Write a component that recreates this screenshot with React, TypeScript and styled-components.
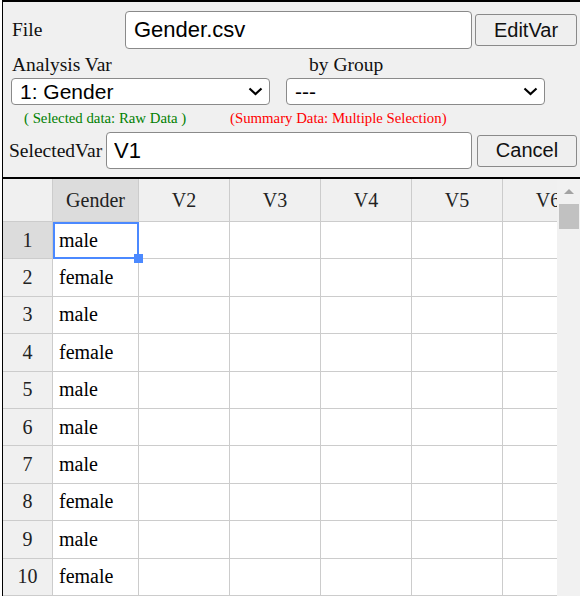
import styled, { createGlobalStyle } from 'styled-components';

const GlobalStyle = createGlobalStyle`
  html, body {
    margin: 0;
    padding: 0;
    background: #ffffff;
    font-family: 'Liberation Serif', 'Times New Roman', serif;
    overflow: hidden;
  }
`;

const Frame = styled.div`
  margin-left: 2px;
  border-left: 1px solid #000;
  height: 596px;
  display: flex;
  flex-direction: column;
`;

const Panel = styled.section`
  background: #f0f0f0;
  border-top: 2px solid #000;
  border-bottom: 2px solid #000;
  padding: 9px 0 8px 0;
  display: flex;
  flex-direction: column;
`;

const Row = styled.div<{ $h: number; $top?: number }>`
  display: flex;
  align-items: center;
  height: ${(p) => p.$h}px;
  margin-top: ${(p) => p.$top ?? 0}px;
`;

const Label = styled.label<{ $w: number; $pad: number }>`
  width: ${(p) => p.$w}px;
  padding-left: ${(p) => p.$pad}px;
  box-sizing: border-box;
  font-size: 19.5px;
  color: #111;
  white-space: nowrap;
`;

const TextBox = styled.input<{ $w: number; $pad: number }>`
  width: ${(p) => p.$w}px;
  height: 100%;
  box-sizing: border-box;
  border: 1px solid #8a8a8a;
  border-radius: 4px;
  background: #fff;
  padding: 0 0 0 ${(p) => p.$pad}px;
  font-family: 'Liberation Sans', Arial, sans-serif;
  font-size: 22px;
  color: #000;
  outline: none;
`;

const Button = styled.button<{ $w: number; $ml: number }>`
  width: ${(p) => p.$w}px;
  height: 32px;
  margin-left: ${(p) => p.$ml}px;
  box-sizing: border-box;
  border: 1px solid #8a8a8a;
  border-radius: 3px;
  background: #efefef;
  font-family: 'Liberation Sans', Arial, sans-serif;
  font-size: 20px;
  color: #111;
  padding: 0;
  cursor: pointer;
`;

const SelectWrap = styled.div<{ $ml: number }>`
  position: relative;
  width: 259px;
  height: 27px;
  margin-left: ${(p) => p.$ml}px;
`;

const Select = styled.select`
  appearance: none;
  width: 100%;
  height: 100%;
  box-sizing: border-box;
  border: 1px solid #8a8a8a;
  border-radius: 4px;
  background: #fff;
  padding: 0 0 0 8px;
  font-family: 'Liberation Sans', Arial, sans-serif;
  font-size: 21px;
  color: #000;
  outline: none;
`;

const Chevron = styled.svg`
  position: absolute;
  right: 7px;
  top: 9px;
  pointer-events: none;
`;

const Note = styled.span<{ $color: string; $w: number; $pad: number }>`
  width: ${(p) => p.$w}px;
  padding-left: ${(p) => p.$pad}px;
  box-sizing: border-box;
  font-size: 14.8px;
  color: ${(p) => p.$color};
  white-space: nowrap;
`;

const SheetArea = styled.div`
  flex: 1;
  display: flex;
  min-height: 0;
  overflow: hidden;
`;

const Sheet = styled.div`
  flex: 1;
  overflow: hidden;
  display: grid;
  grid-template-columns: 50px 86px repeat(5, 91px);
  grid-template-rows: 43px;
  grid-auto-rows: 37.4px;
  align-content: start;
`;

const HeadCell = styled.div<{ $active?: boolean }>`
  background: ${(p) => (p.$active ? '#dcdcdc' : '#f0f0f0')};
  border-right: 1px solid #cccccc;
  border-bottom: 1px solid #cccccc;
  display: flex;
  align-items: center;
  justify-content: center;
  font-size: 20px;
  color: #222;
  white-space: nowrap;
  overflow: hidden;
`;

const Cell = styled.div<{ $selected?: boolean }>`
  position: relative;
  background: #fff;
  border-right: 1px solid #cccccc;
  border-bottom: 1px solid #cccccc;
  display: flex;
  align-items: center;
  padding-left: 6px;
  font-size: 20px;
  color: #000;

  ${(p) =>
    p.$selected &&
    `
    &::after {
      content: '';
      position: absolute;
      left: 0;
      top: 0;
      right: -1px;
      bottom: -1px;
      border: 2px solid #4b89ff;
    }
    &::before {
      content: '';
      position: absolute;
      right: -5px;
      bottom: -5px;
      width: 9px;
      height: 9px;
      background: #4b89ff;
      z-index: 2;
    }
  `}
`;

const ScrollTrack = styled.div`
  width: 23px;
  background: #f1f1f1;
  display: flex;
  flex-direction: column;
  align-items: center;
  padding-top: 10px;
`;

const ScrollArrow = styled.div`
  width: 0;
  height: 0;
  border-left: 5px solid transparent;
  border-right: 5px solid transparent;
  border-bottom: 5px solid #a3a3a3;
`;

const ScrollThumb = styled.div`
  width: 20px;
  height: 25px;
  margin-top: 10px;
  background: #c1c1c1;
`;

const columns = ['Gender', 'V2', 'V3', 'V4', 'V5', 'V6'];
const genders = ['male', 'female', 'male', 'female', 'male', 'male', 'male', 'female', 'male', 'female'];

export default function App() {
  return (
    <>
      <GlobalStyle />
      <Frame>
        <Panel>
          <Row $h={38}>
            <Label $w={122} $pad={9}>File</Label>
            <TextBox $w={347} $pad={8} defaultValue="Gender.csv" readOnly />
            <Button $w={102} $ml={3}>EditVar</Button>
          </Row>
          <Row $h={24} $top={4}>
            <Label $w={306} $pad={9}>Analysis Var</Label>
            <Label $w={200} $pad={0}>by Group</Label>
          </Row>
          <Row $h={27} $top={1}>
            <SelectWrap $ml={8}>
              <Select defaultValue="1">
                <option value="1">1: Gender</option>
              </Select>
              <Chevron width="15" height="9" viewBox="0 0 15 9">
                <path d="M1.5 1.5 L7.5 7 L13.5 1.5" fill="none" stroke="#000" strokeWidth="2.2" />
              </Chevron>
            </SelectWrap>
            <SelectWrap $ml={16}>
              <Select defaultValue="-">
                <option value="-">---</option>
              </Select>
              <Chevron width="15" height="9" viewBox="0 0 15 9">
                <path d="M1.5 1.5 L7.5 7 L13.5 1.5" fill="none" stroke="#000" strokeWidth="2.2" />
              </Chevron>
            </SelectWrap>
          </Row>
          <Row $h={27}>
            <Note $color="#008000" $w={227} $pad={21}>( Selected data: Raw Data )</Note>
            <Note $color="#ff0000" $w={260} $pad={0}>(Summary Data: Multiple Selection)</Note>
          </Row>
          <Row $h={37}>
            <Label $w={103} $pad={6}>SelectedVar</Label>
            <TextBox $w={366} $pad={7} defaultValue="V1" readOnly />
            <Button $w={100} $ml={5}>Cancel</Button>
          </Row>
        </Panel>
        <SheetArea>
          <Sheet>
            <HeadCell />
            {columns.map((c, i) => (
              <HeadCell key={c} $active={i === 0}>{c}</HeadCell>
            ))}
            {genders.map((g, r) => (
              <>
                <HeadCell key={`h${r}`} $active={r === 0}>{r + 1}</HeadCell>
                <Cell key={`g${r}`} $selected={r === 0}>{g}</Cell>
                {columns.slice(1).map((c) => (
                  <Cell key={`${c}${r}`} />
                ))}
              </>
            ))}
          </Sheet>
          <ScrollTrack>
            <ScrollArrow />
            <ScrollThumb />
          </ScrollTrack>
        </SheetArea>
      </Frame>
    </>
  );
}
